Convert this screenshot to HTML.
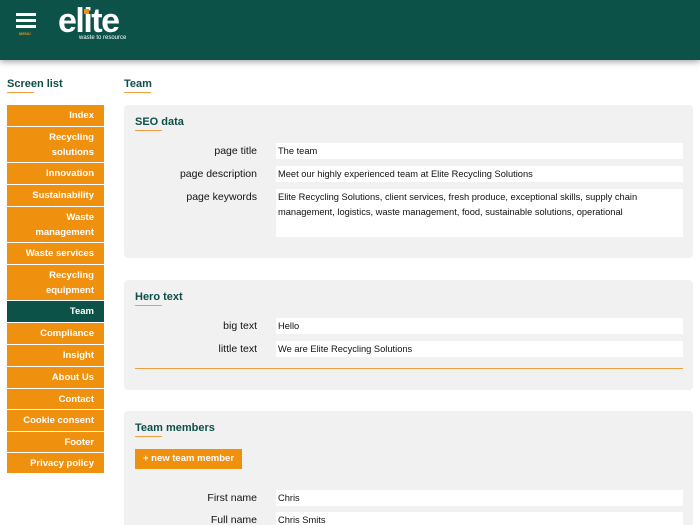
<!DOCTYPE html>
<html style="width:700px;height:525px;overflow:hidden"><head><style>
*{margin:0;padding:0;box-sizing:border-box}
body{width:700px;height:525px;overflow:hidden;background:#fff;font-family:"Liberation Sans",sans-serif;position:relative}
.hdr{position:absolute;left:0;top:0;width:700px;height:60px;background:#0d5249;box-shadow:0 2px 6px rgba(0,0,0,.35)}
.a{position:absolute}
.h{color:#0d4f47;font-weight:bold;font-size:11px}
.ul{position:absolute;height:1px;background:#f0a040;width:27px}
.nav{position:absolute;left:7px;width:97px;background:#f0900f;color:#fff;font-weight:bold;font-size:9.5px;text-align:right;padding-right:10px;line-height:15px;display:flex;flex-direction:column;justify-content:center}
.panel{position:absolute;left:124px;width:569px;background:#f1f1f1;border-radius:4px}
.lbl{position:absolute;right:443px;font-size:10.5px;color:#111;text-align:right;white-space:nowrap}
.in{position:absolute;left:276px;width:407px;height:16px;background:#fff;font-size:9.3px;color:#111;padding:3px 2px;line-height:11px}
</style></head><body>
<div class="hdr">
<div class="a" style="left:16px;top:13px;width:20px;height:3px;background:#fff"></div>
<div class="a" style="left:16px;top:19px;width:20px;height:3px;background:#fff"></div>
<div class="a" style="left:16px;top:25px;width:20px;height:3px;background:#fff"></div>
<div class="a" style="left:19px;top:31px;font-size:4px;color:#f0900f;font-weight:bold">MENU</div>
<div class="a" style="left:58px;top:2px;font-size:34px;font-weight:bold;color:#fff;letter-spacing:-1.5px">elite</div>
<div class="a" style="left:84px;top:9px;width:5px;height:5px;background:#f0900f"></div>
<div class="a" style="left:79px;top:35px;font-size:6px;color:#fff">waste to resource</div>
</div>
<div class="a h" style="left:7px;top:78px">Screen list</div><div class="ul" style="left:7px;top:92px"></div>
<div class="a h" style="left:124px;top:78px">Team</div><div class="ul" style="left:124px;top:92px"></div>

<div class="nav" style="top:105px;height:21px">Index</div>
<div class="nav" style="top:127px;height:35px">Recycling<br>solutions</div>
<div class="nav" style="top:163px;height:21px">Innovation</div>
<div class="nav" style="top:185px;height:21px">Sustainability</div>
<div class="nav" style="top:207px;height:35px">Waste<br>management</div>
<div class="nav" style="top:243px;height:21px">Waste services</div>
<div class="nav" style="top:265px;height:35px">Recycling<br>equipment</div>
<div class="nav" style="top:301px;height:21px;background:#0d5249">Team</div>
<div class="nav" style="top:323px;height:21px">Compliance</div>
<div class="nav" style="top:345px;height:21px">Insight</div>
<div class="nav" style="top:367px;height:21px">About Us</div>
<div class="nav" style="top:389px;height:20px">Contact</div>
<div class="nav" style="top:410px;height:21px">Cookie consent</div>
<div class="nav" style="top:432px;height:20px">Footer</div>
<div class="nav" style="top:453px;height:20px">Privacy policy</div>

<div class="panel" style="top:105px;height:153px"></div>
<div class="a h" style="left:135px;top:116px">SEO data</div><div class="ul" style="left:135px;top:130px"></div>
<div class="lbl" style="top:145px">page title</div><div class="in" style="top:143px">The team</div>
<div class="lbl" style="top:168px">page description</div><div class="in" style="top:166px">Meet our highly experienced team at Elite Recycling Solutions</div>
<div class="lbl" style="top:191px">page keywords</div><div class="in" style="top:189px;height:48px;line-height:15px;padding-top:1px">Elite Recycling Solutions, client services, fresh produce, exceptional skills, supply chain management, logistics, waste management, food, sustainable solutions, operational</div>

<div class="panel" style="top:280px;height:110px"></div>
<div class="a h" style="left:135px;top:291px">Hero text</div><div class="ul" style="left:135px;top:305px"></div>
<div class="lbl" style="top:320px">big text</div><div class="in" style="top:318px">Hello</div>
<div class="lbl" style="top:343px">little text</div><div class="in" style="top:341px">We are Elite Recycling Solutions</div>
<div class="a" style="left:135px;top:368px;width:548px;height:1px;background:#f0a040"></div>

<div class="panel" style="top:411px;height:114px;border-radius:4px 4px 0 0"></div>
<div class="a h" style="left:135px;top:422px">Team members</div><div class="ul" style="left:135px;top:436px"></div>
<div class="a" style="left:135px;top:449px;width:107px;height:20px;background:#f0900f;color:#fff;font-weight:bold;font-size:9.5px;text-align:center;line-height:20px">+ new team member</div>
<div class="lbl" style="top:492px">First name</div><div class="in" style="top:490px">Chris</div>
<div class="lbl" style="top:514px">Full name</div><div class="in" style="top:512px;height:13px">Chris Smits</div>
</body></html>
